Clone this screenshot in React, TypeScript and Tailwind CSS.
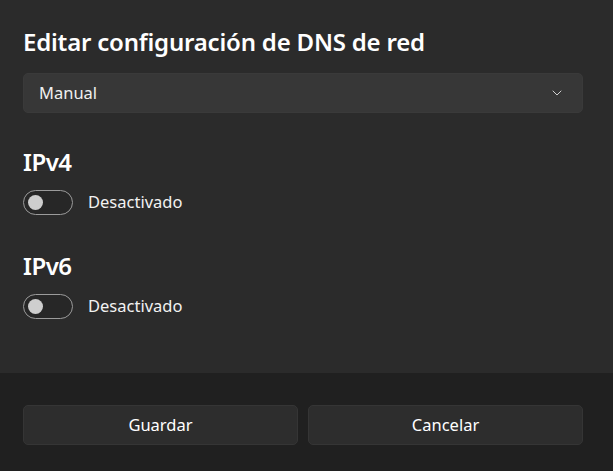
import { ChevronDown } from "lucide-react";

function Toggle() {
  return (
    <div className="flex h-[25px] w-[50px] items-center rounded-full border border-[#9b9b9b] bg-[#272727] pl-[4px]">
      <span className="block h-[15px] w-[15px] rounded-full bg-[#cecece]" />
    </div>
  );
}

function Section({ title }: { title: string }) {
  return (
    <div>
      <h2 className="h-[32px] text-[24px] font-semibold leading-[32px] tracking-[-0.5px] text-white">{title}</h2>
      <div className="mt-[12px] flex items-center gap-[15px]">
        <Toggle />
        <span className="text-[16.5px] text-[#f2f2f2]">Desactivado</span>
      </div>
    </div>
  );
}

export default function App() {
  return (
    <div className="flex h-[471px] w-[613px] flex-col font-['Noto_Sans',sans-serif] text-white">
      <div className="flex-1 bg-[#2b2b2b] px-[23px] pt-[26px]">
        <h1 className="h-[32px] text-[24px] font-semibold leading-[32px] tracking-[-0.2px]">
          Editar configuración de DNS de red
        </h1>
        <div className="mt-[15px] flex h-[40px] w-[560px] items-center justify-between rounded-[5px] border border-[#3a3a3a] bg-[#373737] pl-[15px] pr-[17px]">
          <span className="text-[16.5px] text-[#f0f0f0]">Manual</span>
          <ChevronDown size={16} strokeWidth={1.5} className="text-[#d0d0d0]" />
        </div>
        <div className="mt-[33px]">
          <Section title="IPv4" />
        </div>
        <div className="mt-[35px]">
          <Section title="IPv6" />
        </div>
      </div>
      <div className="flex h-[98px] gap-[10px] bg-[#202020] px-[23px] pt-[32px]">
        <button className="h-[40px] w-[275px] rounded-[5px] border border-[#353535] bg-[#2d2d2d] text-[16.5px] text-white">
          Guardar
        </button>
        <button className="h-[40px] w-[275px] rounded-[5px] border border-[#353535] bg-[#2d2d2d] text-[16.5px] text-white">
          Cancelar
        </button>
      </div>
    </div>
  );
}
